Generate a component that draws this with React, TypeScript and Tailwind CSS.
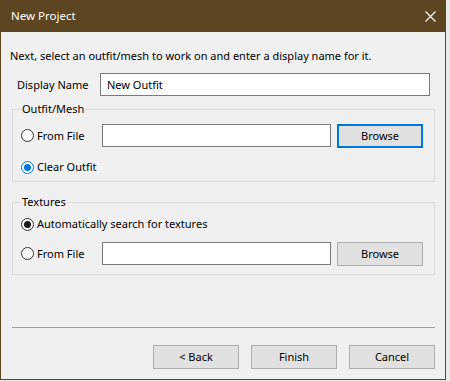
import React from "react";

const font = { fontFamily: '"Noto Sans", "Open Sans", sans-serif' };

function Radio({ checked, blue }: { checked?: boolean; blue?: boolean }) {
  const ring = checked && blue ? "border-[#0078d7]" : "border-[#333333]";
  const dot = blue ? "bg-[#0078d7]" : "bg-[#1a1a1a]";
  return (
    <span className={`w-[13px] h-[13px] rounded-full border ${ring} bg-white flex items-center justify-center shrink-0`}>
      {checked && <span className={`w-[7px] h-[7px] rounded-full ${dot}`} />}
    </span>
  );
}

function Button({ label, focused }: { label: string; focused?: boolean }) {
  return (
    <div
      className={`w-[86px] h-[24px] flex items-center justify-center bg-[#e1e1e1] ${
        focused ? "border-2 border-[#0078d7]" : "border border-[#adadad]"
      }`}
    >
      {label}
    </div>
  );
}

function TextBox({ w, value }: { w: string; value?: string }) {
  return (
    <div className={`${w} h-[23px] bg-white border border-[#7a7a7a] flex items-center pl-[6px]`}>
      {value}
    </div>
  );
}

export default function App() {
  return (
    <div className="w-[450px] h-[381px] bg-[#ebebeb] text-[11px] text-black leading-[16px]" style={font}>
      <div className="w-[446px] h-[380px] flex flex-col bg-[#f0f0f0] border-x border-b border-[#5c4520]">
        <div className="h-[32px] -mx-px bg-[#5c4520] flex items-center justify-between pl-[11px] pr-[10px] text-white shrink-0">
          <span className="text-[11.5px]">New Project</span>
          <svg width="11" height="11" viewBox="0 0 11 11">
            <path d="M0.5 0.5 L10.5 10.5 M10.5 0.5 L0.5 10.5" stroke="#ffffff" strokeWidth="1.1" fill="none" />
          </svg>
        </div>

        <div className="flex flex-col">
          <p className="mt-[16px] ml-[9px] h-[16px]">Next, select an outfit/mesh to work on and enter a display name for it.</p>

          <div className="mt-[9px] flex items-center pl-[16px]">
            <span className="w-[83px]">Display Name</span>
            <TextBox w="w-[330px]" value="New Outfit" />
          </div>

          <fieldset className="mt-[5px] ml-[11px] w-[423px] border border-[#dcdcdc] pl-[8px] pb-[6px]">
            <legend className="px-[1px] h-[16px]">Outfit/Mesh</legend>
            <div className="mt-[7px] flex items-start">
              <label className="w-[81px] h-[23px] flex items-center gap-[3px]">
                <Radio />
                <span>From File</span>
              </label>
              <TextBox w="w-[229px]" />
              <div className="ml-[6px]">
                <Button label="Browse" focused />
              </div>
            </div>
            <label className="mt-[11px] h-[16px] flex items-center gap-[3px]">
              <Radio checked blue />
              <span>Clear Outfit</span>
            </label>
          </fieldset>

          <fieldset className="mt-[12px] ml-[11px] w-[423px] border border-[#dcdcdc] pl-[8px] pb-[8px]">
            <legend className="px-[1px] h-[16px]">Textures</legend>
            <label className="mt-[6px] h-[16px] flex items-center gap-[3px]">
              <Radio checked />
              <span>Automatically search for textures</span>
            </label>
            <div className="mt-[10px] flex items-start">
              <label className="w-[81px] h-[23px] flex items-center gap-[3px]">
                <Radio />
                <span>From File</span>
              </label>
              <TextBox w="w-[229px]" />
              <div className="ml-[6px]">
                <Button label="Browse" />
              </div>
            </div>
          </fieldset>

          <div className="mt-[52px] ml-[11px] w-[423px] h-px bg-[#a0a0a0]" />

          <div className="mt-[17px] flex justify-end gap-[12px] pr-[10px]">
            <Button label="< Back" />
            <Button label="Finish" />
            <Button label="Cancel" />
          </div>
        </div>
      </div>
    </div>
  );
}
